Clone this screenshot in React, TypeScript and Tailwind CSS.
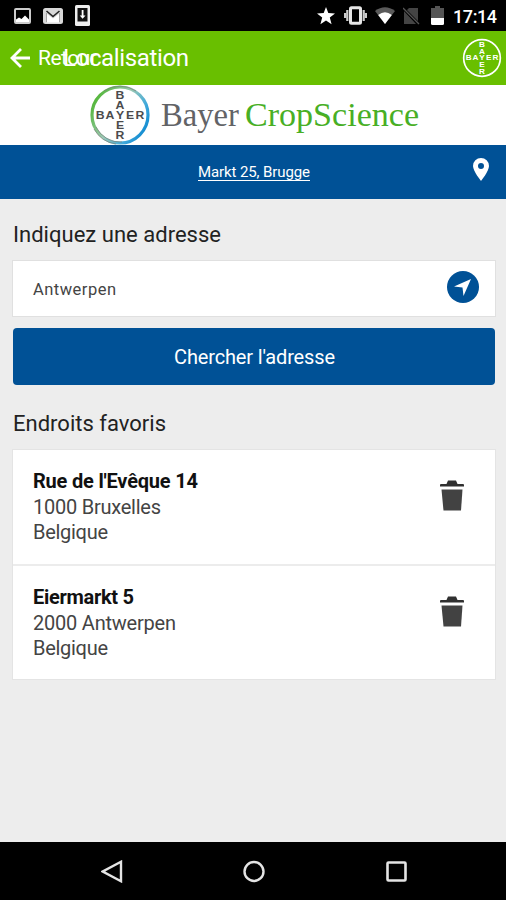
import type { ReactNode } from "react";

const favorites = [
  { street: "Rue de l'Evêque 14", city: "1000 Bruxelles", country: "Belgique" },
  { street: "Eiermarkt 5", city: "2000 Antwerpen", country: "Belgique" },
];

function Line({
  children,
  width,
  size,
  height,
  baseline,
  className = "",
}: {
  children: ReactNode;
  width: number;
  size: number;
  height: number;
  baseline: number;
  className?: string;
}) {
  return (
    <svg width={width} height={height} className={`block shrink-0 overflow-visible ${className}`}>
      <text x="0" y={baseline} fontSize={size} textLength={width} fill="currentColor">
        {children}
      </text>
    </svg>
  );
}

// Vertical + horizontal wordmark sharing the middle Y
function BayerLetters({ color }: { color: string }) {
  return (
    <g fill={color} fontFamily="'Liberation Sans', Arial, sans-serif" fontWeight="700" textAnchor="middle">
      {["B", "A", "Y", "E", "R"].map((l, i) => (
        <text key={`v${l}`} transform={`translate(30 ${13.6 + i * 10}) scale(1.2 1)`} fontSize="10.2">
          {l}
        </text>
      ))}
      {["B", "A", "Y", "E", "R"].map((l, i) =>
        i === 2 ? null : (
          <text key={`h${l}`} transform={`translate(${[10.2, 20, 30, 40, 50][i]} 33.6) scale(1.2 1)`} fontSize="10.2">
            {l}
          </text>
        ),
      )}
    </g>
  );
}

function StatusBar() {
  return (
    <div className="flex h-[31px] shrink-0 items-center justify-between bg-black pr-[9px] pl-[14px] text-white">
      <div className="flex items-center gap-3">
        <svg width="17" height="16" viewBox="0 0 17 16">
          <rect x="1" y="1" width="15" height="14" rx="1" fill="none" stroke="#ccc" strokeWidth="2" />
          <path d="M2 14V11.500L5 9.500L7.500 11L11 7.500L15 11.500V14Z" fill="#fff" />
        </svg>
        <svg width="20" height="16" viewBox="0 0 20 16">
          <rect width="20" height="16" rx="2.500" fill="#d8d8d8" />
          <path d="M4 14.500V6L10 10.500L16 6V14.500Z" fill="#fff" />
          <path d="M3.500 3L10 8.500L16.500 3" fill="none" stroke="#222" strokeWidth="1.600" />
          <path d="M3.500 5V14M16.500 5V14" stroke="#999" strokeWidth="0.800" />
        </svg>
        <svg width="15" height="21" viewBox="0 0 15 21">
          <rect width="15" height="21" rx="1.500" fill="#eee" />
          <rect x="2.500" y="3" width="10" height="13.500" fill="#111" />
          <path d="M6.700 5h1.800v5.500h2l-2.900 3.200L4.700 10.500h2Z" fill="#fff" />
        </svg>
      </div>
      <div className="flex items-center">
        <svg width="18" height="18" viewBox="0 0 18 18" className="mr-[9px]">
          <path d="M9 0l2.300 6.100 6.700.300-5.200 4.200 1.800 6.700L9 13.500l-5.600 3.800 1.800-6.700L0 6.400l6.700-.300Z" fill="#fff" />
        </svg>
        <svg width="23" height="19" viewBox="0 0 23 19" className="mr-[8px]">
          <rect x="6.500" y="1.800" width="10" height="15.500" rx="1" fill="none" stroke="#e6e6e6" strokeWidth="3" />
          <path d="M3.300 4v11M19.700 4v11M1 7v5M22 7v5" stroke="#ccc" strokeWidth="2.200" />
        </svg>
        <svg width="20" height="17" viewBox="0 0 20 17" className="mr-[8px]">
          <path d="M0 4Q10-3.500 20 4L10 17Z" fill="#5a5a5a" />
          <path d="M3.200 8Q10 2.500 16.800 8L10 17Z" fill="#fff" />
        </svg>
        <svg width="17" height="18" viewBox="0 0 17 18" className="mr-[11px]">
          <path d="M6 1h9v15L3 4Z" fill="#444" />
          <path d="M1 4v13h12Z" fill="#444" />
          <path d="M.500 1.500L16 17" stroke="#000" strokeWidth="2.500" />
          <path d="M0 1L16 17" stroke="#555" strokeWidth="1.300" />
        </svg>
        <svg width="13" height="19" viewBox="0 0 13 19" className="mr-[9px]">
          <path d="M4 0h5v2h4v10H0V2h4Z" fill="#555" />
          <path d="M0 12h13v5.500a1.500 1.500 0 0 1-1.500 1.500h-10A1.500 1.500 0 0 1 0 17.500Z" fill="#fff" />
        </svg>
        <Line width={44} size={18} height={20} baseline={17} className="font-medium">
          17:14
        </Line>
      </div>
    </div>
  );
}

function Header() {
  return (
    <header className="flex h-[54px] shrink-0 items-center bg-[#69bf00] pr-[4px] pl-[10px] text-white">
      <svg width="20" height="20" viewBox="0 0 20 20" className="mr-2">
        <path d="M20 10H2M11 1L2 10L11 19" fill="none" stroke="#fff" strokeWidth="2.800" />
      </svg>
      <Line width={59} size={21} height={24} baseline={19}>
        Retour
      </Line>
      {/* The title runs over the back label */}
      <Line width={126} size={24} height={24} baseline={20} className="-ml-[34px]">
        Localisation
      </Line>
      <svg width="40" height="40" viewBox="0 0 60 60" className="ml-auto">
        <circle cx="30" cy="30" r="27.500" fill="none" stroke="#fff" strokeWidth="2.500" />
        <BayerLetters color="#fff" />
      </svg>
    </header>
  );
}

function Brand() {
  return (
    <div className="flex h-[60px] shrink-0 items-center bg-white pl-[90px]">
      <svg width="60" height="60" viewBox="0 0 60 60">
        <defs>
          <linearGradient id="ring" x1="0" y1="0.200" x2="1" y2="0.800">
            <stop offset="0" stopColor="#4db52d" />
            <stop offset="0.450" stopColor="#9cc9b4" />
            <stop offset="0.750" stopColor="#43aadb" />
            <stop offset="1" stopColor="#0a86cf" />
          </linearGradient>
        </defs>
        <circle cx="30" cy="30" r="28" fill="none" stroke="url(#ring)" strokeWidth="3.200" />
        <path
          d="M14 6A29 29 0 0 1 46 6M32 57A27 27 0 0 1 6 42M4 44A29.500 29.500 0 0 0 26 59"
          fill="none"
          stroke="#777f78"
          strokeWidth="0.700"
        />
        <BayerLetters color="#4b4b4d" />
      </svg>
      <svg width="260" height="60" className="ml-[11px]" fontFamily="'Liberation Serif', serif">
        <text x="0" y="41" fontSize="33" textLength="78" lengthAdjust="spacingAndGlyphs" fill="#626366">
          Bayer
        </text>
        <text x="84" y="41" fontSize="33" textLength="174" lengthAdjust="spacingAndGlyphs" fill="#48af25">
          CropScience
        </text>
      </svg>
    </div>
  );
}

function LocationBar() {
  return (
    <div className="flex h-[54px] shrink-0 items-center justify-end bg-[#005196] pr-[17px] text-white">
      <div className="mt-px border-b border-white">
        <Line width={112} size={15} height={16} baseline={13}>
          Markt 25, Brugge
        </Line>
      </div>
      <svg width="16" height="23" viewBox="0 0 16 23" className="mb-[5px] ml-[163px]">
        <path
          fillRule="evenodd"
          d="M8 0a8 8 0 0 1 8 8c0 5-8 15-8 15S0 13 0 8a8 8 0 0 1 8-8Zm0 5a3 3 0 1 0 0 6 3 3 0 0 0 0-6Z"
          fill="#fff"
        />
      </svg>
    </div>
  );
}

function TrashIcon() {
  return (
    <svg width="24" height="31" viewBox="0 0 24 31">
      <path d="M0 6.500V5q0-1 1-1h5.500L8 .500h8L17.500 4H23q1 0 1 1v1.500Z" fill="#303030" />
      <path d="M1.500 9.500h21l-1.500 21H3.500Z" fill="#424242" />
    </svg>
  );
}

export default function App() {
  return (
    <div className="flex h-[900px] w-[506px] flex-col overflow-hidden bg-[#ededed] font-['Roboto',sans-serif]">
      <StatusBar />
      <Header />
      <Brand />
      <LocationBar />

      <main className="flex-1 pr-[10px] pl-3 text-[#222]">
        <div className="flex h-[61px] items-end pb-[11px] pl-px">
          <Line width={208} size={22} height={24} baseline={17}>
            Indiquez une adresse
          </Line>
        </div>
        <div className="flex h-[57px] items-center justify-between border border-[#e0e0e0] bg-white pr-4 pl-[19.5px]">
          <Line width={83} size={16.5} height={20} baseline={16} className="text-[#444]">
            Antwerpen
          </Line>
          <svg width="32" height="32" viewBox="0 0 32 32" className="mb-[3px]">
            <circle cx="16" cy="16" r="16" fill="#005196" />
            <path d="M24 8L16.500 25L15.500 16.500L7 15.500Z" fill="#fff" />
          </svg>
        </div>
        <button className="mt-[11px] ml-px flex h-[57px] w-[482px] items-center justify-center rounded-[4px] bg-[#005196] text-white">
          <Line width={161} size={20} height={24} baseline={19}>
            Chercher l'adresse
          </Line>
        </button>
        <div className="flex h-[64px] items-end pb-[11px] pl-px">
          <Line width={153} size={22} height={24} baseline={17}>
            Endroits favoris
          </Line>
        </div>
        <ul className="border border-[#e4e4e4] bg-white">
          {favorites.map((f, i) => (
            <li
              key={f.street}
              className={`flex justify-between pr-[31px] pl-[19.5px] ${i > 0 ? "h-[115px] border-t-2 border-[#ececec] pt-[30px]" : "h-[114px] pt-[30px]"}`}
            >
              <div className="text-[#444]">
                <Line width={[165, 101][i]} size={20} height={25} baseline={8} className="font-bold text-[#111]">
                  {f.street}
                </Line>
                <Line width={[128, 143][i]} size={20} height={25} baseline={9}>
                  {f.city}
                </Line>
                <Line width={75} size={20} height={25} baseline={9}>
                  {f.country}
                </Line>
              </div>
              <TrashIcon />
            </li>
          ))}
        </ul>
      </main>

      <nav className="flex h-[58px] shrink-0 items-center bg-black pl-[101px]">
        <svg width="22" height="23" viewBox="0 0 22 23">
          <path d="M20 1.800V21.200L1.800 11.500Z" fill="none" stroke="#e4e4e4" strokeWidth="2.400" />
        </svg>
        <svg width="22" height="23" viewBox="0 0 22 23" className="ml-[120px]">
          <circle cx="11" cy="11.500" r="9.500" fill="none" stroke="#e4e4e4" strokeWidth="2.400" />
        </svg>
        <svg width="21" height="21" viewBox="0 0 21 21" className="ml-[121px]">
          <rect x="1.500" y="1.500" width="18" height="18" rx="1" fill="none" stroke="#e4e4e4" strokeWidth="2.600" />
        </svg>
      </nav>
    </div>
  );
}
